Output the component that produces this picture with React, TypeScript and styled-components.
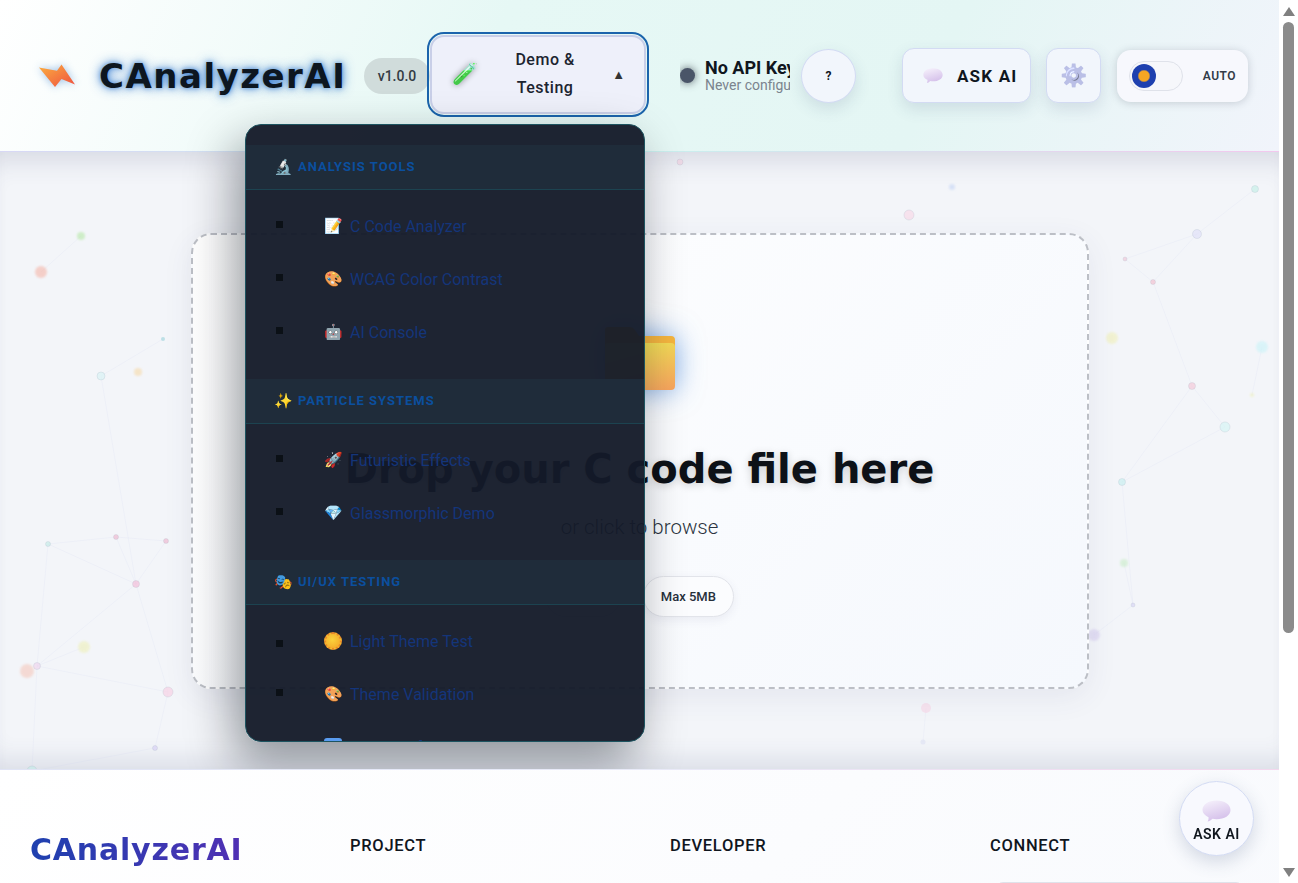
import styled, { createGlobalStyle } from 'styled-components'

const bodyFont = `Roboto, 'Liberation Sans', sans-serif`
const logoFont = `'DejaVu Sans', 'Liberation Sans', sans-serif`

const GlobalStyle = createGlobalStyle`
  * { box-sizing: border-box; }
  html, body { height: 100%; }
  body { margin: 0; overflow: hidden; background: #fff; font-family: ${bodyFont}; color: #0d1117; }
`

type Dot = { x: number; y: number; r: number; c: string; soft?: boolean; ring?: boolean }

const dots: Dot[] = [
  { x: 81, y: 236, r: 4, c: '#b6e8a8', soft: true },
  { x: 41, y: 272, r: 6, c: '#f5b5a8', soft: true },
  { x: 163, y: 339, r: 2, c: '#9fd4dc' },
  { x: 101, y: 376, r: 4, c: '#d8f3f5', ring: true },
  { x: 138, y: 372, r: 4, c: '#f6d9a8', soft: true },
  { x: 48, y: 544, r: 2.5, c: '#c5ece8', ring: true },
  { x: 116, y: 537, r: 2.5, c: '#f0b8d0', ring: true },
  { x: 166, y: 541, r: 2.5, c: '#f0b8d0', ring: true },
  { x: 136, y: 584, r: 3.5, c: '#f5bcd8', ring: true },
  { x: 84, y: 647, r: 6, c: '#eef0b8', soft: true },
  { x: 37, y: 666, r: 3.5, c: '#f0d5ee', ring: true },
  { x: 27, y: 671, r: 7, c: '#f5c8bc', soft: true },
  { x: 168, y: 692, r: 5, c: '#f8d0e4', ring: true },
  { x: 155, y: 748, r: 2.5, c: '#d8d0f5', ring: true },
  { x: 32, y: 771, r: 5, c: '#c5ece8', ring: true },
  { x: 680, y: 162, r: 3, c: '#f0d0e0', ring: true },
  { x: 952, y: 187, r: 3, c: '#c5d5f5', soft: true },
  { x: 909, y: 215, r: 5, c: '#f8d8e8', ring: true },
  { x: 926, y: 708, r: 5, c: '#f8d8e8' },
  { x: 923, y: 742, r: 2.5, c: '#dfe2f3' },
  { x: 1255, y: 189, r: 3.5, c: '#c5f0e8', ring: true },
  { x: 1197, y: 234, r: 4.5, c: '#e0e0f8', ring: true },
  { x: 1125, y: 259, r: 2, c: '#f0c8d8', ring: true },
  { x: 1153, y: 282, r: 2.5, c: '#f5c0d0', ring: true },
  { x: 1112, y: 338, r: 6, c: '#f0f0b8', soft: true },
  { x: 1262, y: 347, r: 6, c: '#c8f3f8', soft: true },
  { x: 1252, y: 395, r: 2, c: '#eef0b8', soft: true },
  { x: 1192, y: 386, r: 3.5, c: '#f5c8d8', ring: true },
  { x: 1225, y: 427, r: 5, c: '#d5f5f5', ring: true },
  { x: 1122, y: 482, r: 3.5, c: '#c8f0f0', ring: true },
  { x: 1124, y: 563, r: 4, c: '#c8ecc8', soft: true },
  { x: 1133, y: 605, r: 2, c: '#d8d5f5', ring: true },
  { x: 1094, y: 635, r: 6, c: '#d8d0f0', soft: true },
]

const links: [number, number][] = [
  [0, 1], [2, 3], [3, 8], [5, 6], [5, 8], [6, 7], [6, 8], [7, 8], [8, 12], [8, 10],
  [9, 10], [10, 12], [5, 10], [10, 14], [12, 13], [13, 14], [18, 19],
  [20, 21], [21, 22], [21, 23], [22, 23], [23, 27], [27, 28], [25, 26], [27, 29], [28, 29],
  [29, 31], [30, 31], [31, 32],
]

const BackgroundNet = () => (
  <Net viewBox="0 152 1279 617">
    {links.map(([a, b]) => (
      <NetLine key={`${a}-${b}`} x1={dots[a].x} y1={dots[a].y} x2={dots[b].x} y2={dots[b].y} />
    ))}
    {dots.map((d) => (
      <NetDot key={`${d.x}-${d.y}`} cx={d.x} cy={d.y} r={d.r} fill={d.c} $soft={d.soft} $ring={d.ring} />
    ))}
  </Net>
)

const Bubble = ({ size, id }: { size: number; id: string }) => (
  <svg width={size} height={(size * 22) / 29} viewBox="0 0 29 22">
    <defs>
      <linearGradient id={id} x1="0.2" y1="0" x2="0.6" y2="1">
        <stop offset="0" stopColor="#f5f0fb" />
        <stop offset="1" stopColor="#d3bde9" />
      </linearGradient>
    </defs>
    <path
      d="M14.5 .5 C22.5 .5 28.5 4.5 28.5 10 C28.5 15.5 22.5 19.2 14.5 19.2 C13 19.2 11.8 19 10.5 18.8 C9 20.4 7 21.6 5.6 21.6 C6.4 20.2 6.7 18.6 6.5 17.2 C2.8 15.6 .5 13 .5 10 C.5 4.5 6.5 .5 14.5 .5 Z"
      fill={`url(#${id})`}
    />
  </svg>
)

const menu = [
  {
    icon: '🔬',
    title: 'Analysis Tools',
    items: [
      ['📝', 'C Code Analyzer'],
      ['🎨', 'WCAG Color Contrast'],
      ['🤖', 'AI Console'],
    ],
  },
  {
    icon: '✨',
    title: 'Particle Systems',
    items: [
      ['🚀', 'Futuristic Effects'],
      ['💎', 'Glassmorphic Demo'],
    ],
  },
  {
    icon: '🎭',
    title: 'UI/UX Testing',
    items: [
      ['sun', 'Light Theme Test'],
      ['🎨', 'Theme Validation'],
      ['info', 'Theme Info'],
    ],
  },
]

const MenuIcon = ({ icon }: { icon: string }) => {
  if (icon === 'sun') return <SunTile />
  if (icon === 'info') return <InfoTile>i</InfoTile>
  return <MenuEmoji>{icon}</MenuEmoji>
}

const App = () => {
  return (
    <>
      <GlobalStyle />
      <Root>
        <Page>
          <Header>
            <Brand>
              <svg width="38" height="24" viewBox="0 0 38 24">
                <defs>
                  <linearGradient id="bolt" x1="0" y1="0" x2="1" y2="1">
                    <stop offset="0" stopColor="#fbb040" />
                    <stop offset="1" stopColor="#ef4f3f" />
                  </linearGradient>
                </defs>
                <path d="M1 3.5 L19 6.7 L23.5 .5 L37 20.5 L23.5 15 L17 23 Z" fill="url(#bolt)" />
              </svg>
              <LogoText>CAnalyzerAI</LogoText>
            </Brand>
            <Version>v1.0.0</Version>
            <MenuWrap>
              <DemoButton>
                <DemoIcon>🧪</DemoIcon>
                <DemoLabel>Demo &amp; Testing</DemoLabel>
                <Caret>▲</Caret>
              </DemoButton>
              <Menu>
                {menu.map((section) => (
                  <section key={section.title}>
                    <SectionHead>
                      <SectionIcon>{section.icon}</SectionIcon>
                      {section.title}
                    </SectionHead>
                    <MenuList>
                      {section.items.map(([icon, label]) => (
                        <li key={label}>
                          <MenuLink href="#">
                            <MenuIcon icon={icon} />
                            {label}
                          </MenuLink>
                        </li>
                      ))}
                    </MenuList>
                  </section>
                ))}
              </Menu>
            </MenuWrap>
            <Status>
              <StatusDot />
              <StatusText>
                <strong>No API Key</strong>
                <span>Never configured</span>
              </StatusText>
            </Status>
            <HelpButton>?</HelpButton>
            <AskButton>
              <Bubble size={20} id="bubbleHead" />
              ASK AI
            </AskButton>
            <GearButton>
              <GearEmoji>⚙️</GearEmoji>
            </GearButton>
            <ThemeCard>
              <Track>
                <Knob />
              </Track>
              <AutoLabel>AUTO</AutoLabel>
            </ThemeCard>
          </Header>

          <Main>
            <BackgroundNet />
            <DropZone>
              <FolderIcon width="70" height="64" viewBox="0 0 70 64">
                <defs>
                  <linearGradient id="folderFront" x1="0.5" y1="0" x2="0.9" y2="1">
                    <stop offset="0" stopColor="#f2e256" />
                    <stop offset="1" stopColor="#f8a55e" />
                  </linearGradient>
                </defs>
                <path d="M3 0 H25 Q28 0 30 3 L34 9 H66 Q70 9 70 13 V30 H0 V3 Q0 0 3 0 Z" fill="#f5b53f" />
                <path d="M4 16 H66 Q70 16 70 20 V59 Q70 63 66 63 H4 Q0 63 0 59 V20 Q0 16 4 16 Z" fill="url(#folderFront)" />
              </FolderIcon>
              <DropTitle>Drop your C code file here</DropTitle>
              <DropSub>or click to browse</DropSub>
              <Chips>
                <Chip>.c or .h</Chip>
                <Chip>Max 5MB</Chip>
              </Chips>
            </DropZone>
          </Main>

          <Footer>
            <div>
              <FooterLogo>CAnalyzerAI</FooterLogo>
              <FooterBlurb>Intelligent C code analysis and quality insight powered by AI.</FooterBlurb>
            </div>
            <ColTitle>Project</ColTitle>
            <ColTitle>Developer</ColTitle>
            <div>
              <ColTitle>Connect</ColTitle>
              <ConnectBox />
            </div>
          </Footer>
        </Page>

        <ScrollRail>
          <ArrowUp />
          <Thumb />
          <ArrowDown />
        </ScrollRail>
      </Root>

      <FloatButton>
        <Bubble size={29} id="bubbleFloat" />
        ASK AI
      </FloatButton>
    </>
  )
}

const Root = styled.div`
  height: 100vh;
  display: flex;
  overflow: hidden;
`

const Page = styled.div`
  flex: 1;
  min-width: 0;
  overflow: hidden;
`

const ScrollRail = styled.div`
  flex: none;
  width: 19px;
  padding: 7px 0 6px;
  display: flex;
  flex-direction: column;
  align-items: center;
  background: #fff;
`

const ArrowUp = styled.i`
  width: 0;
  height: 0;
  border-left: 6px solid transparent;
  border-right: 6px solid transparent;
  border-bottom: 9px solid #808080;
`

const ArrowDown = styled.i`
  width: 0;
  height: 0;
  margin-top: auto;
  border-left: 6px solid transparent;
  border-right: 6px solid transparent;
  border-top: 9px solid #808080;
`

const Thumb = styled.div`
  width: 11px;
  height: 611px;
  margin-top: 6px;
  border-radius: 6px;
  background: #8b8b8b;
`

const Header = styled.header`
  height: 152px;
  display: flex;
  align-items: center;
  padding-left: 38px;
  background: linear-gradient(115deg, #ffffff 0%, #e6f8f5 38%, #e4f6f4 72%, #f1f4fb 100%);
  border-bottom: 1px solid;
  border-image: linear-gradient(90deg, #d8d8f5, #c8f0ee 50%, #f3c8ee) 1;
`

const Brand = styled.div`
  flex: none;
  width: 326px;
  display: flex;
  align-items: center;
  gap: 23px;
  svg { filter: drop-shadow(0 0 4px rgba(30, 110, 200, 0.45)); }
`

const LogoText = styled.div`
  font-family: ${logoFont};
  font-weight: 700;
  font-size: 34px;
  line-height: 1;
  letter-spacing: 1.5px;
  color: #0d1620;
  text-shadow: 0 0 12px rgba(20, 100, 200, 0.8), 0 0 5px rgba(20, 100, 200, 0.6);
  white-space: nowrap;
`

const Version = styled.div`
  flex: none;
  width: 66px;
  height: 36px;
  border-radius: 18px;
  background: #d0dcdb;
  color: #333b44;
  display: flex;
  align-items: center;
  justify-content: center;
  font-size: 14px;
  font-weight: 500;
`

const MenuWrap = styled.div`
  flex: none;
  position: relative;
  margin-bottom: 3px;
`

const DemoButton = styled.button`
  width: 216px;
  height: 79px;
  padding: 0 19px 0 20px;
  display: flex;
  align-items: center;
  background: #eef0fa;
  border: 2px solid #c9cfe8;
  border-radius: 14px;
  outline: 2px solid #1b64ac;
  outline-offset: 1px;
  font-family: inherit;
  color: #1c2430;
`

const DemoIcon = styled.span`
  font-size: 21px;
  filter: hue-rotate(-50deg) saturate(0.8) brightness(1.1) drop-shadow(0 0 3px rgba(0, 0, 0, 0.4));
`

const DemoLabel = styled.span`
  flex: 1;
  padding: 0 30px;
  font-size: 16px;
  font-weight: 500;
  line-height: 28px;
  letter-spacing: 0.5px;
  text-align: center;
`

const Caret = styled.span`
  font-size: 13px;
  color: #333;
`

const Menu = styled.nav`
  position: absolute;
  z-index: 20;
  top: 89px;
  right: 1px;
  width: 400px;
  height: 618px;
  padding-top: 20px;
  overflow: hidden;
  background: rgba(20, 26, 41, 0.955);
  border: 1px solid #1d5460;
  border-radius: 16px;
  box-shadow: -10px 20px 48px rgba(0, 10, 20, 0.42);
`

const SectionHead = styled.h3`
  margin: 0;
  height: 45px;
  padding-left: 28px;
  display: flex;
  align-items: center;
  gap: 8px;
  background: #1f2c3a;
  border-bottom: 1px solid #1c4350;
  color: #0b4f9e;
  font-size: 13px;
  font-weight: 700;
  letter-spacing: 1px;
  text-transform: uppercase;
`

const SectionIcon = styled.span`
  width: 16px;
  font-size: 15px;
  letter-spacing: 0;
`

const MenuList = styled.ul`
  margin: 10px 0 20px;
  padding-left: 50px;
  list-style: square;
  font-size: 22px;
  color: #0b1016;
`

const MenuLink = styled.a`
  height: 53px;
  padding-left: 28px;
  display: flex;
  align-items: center;
  gap: 8px;
  color: #14357a;
  font-size: 16px;
  text-decoration: none;
`

const MenuEmoji = styled.span`
  width: 18px;
  font-size: 15px;
`

const SunTile = styled.span`
  width: 18px;
  height: 18px;
  border-radius: 50%;
  border: 2px dotted #ea8a2a;
  background: radial-gradient(circle at 45% 40%, #fbd23c, #f3a326);
`

const InfoTile = styled.span`
  width: 18px;
  height: 18px;
  border-radius: 3px;
  background: #5a9cf0;
  color: #fff;
  font-size: 13px;
  font-weight: 700;
  line-height: 18px;
  text-align: center;
`

const Status = styled.div`
  flex: none;
  width: 110px;
  margin-left: 34px;
  padding: 6px 0;
  display: flex;
  align-items: center;
  gap: 10px;
  overflow: hidden;
`

const StatusDot = styled.i`
  flex: none;
  width: 15px;
  height: 15px;
  border-radius: 50%;
  background: #4a5568;
  box-shadow: 0 0 8px rgba(50, 60, 70, 0.8);
`

const StatusText = styled.div`
  display: flex;
  flex-direction: column;
  white-space: nowrap;
  strong { font-size: 18px; line-height: 18px; color: #10161e; }
  span { margin-top: 1px; font-size: 14px; line-height: 14px; color: #7b848e; }
`

const raised = `
  flex: none;
  background: #f2f6fc;
  border: 1px solid #d3dbf3;
  box-shadow: 0 6px 16px rgba(60, 80, 120, 0.14);
  font-family: inherit;
  color: #10161e;
`

const HelpButton = styled.button`
  ${raised}
  width: 55px;
  height: 54px;
  margin-left: 11px;
  border-radius: 50%;
  font-size: 12px;
  font-weight: 700;
`

const AskButton = styled.button`
  ${raised}
  width: 129px;
  height: 55px;
  margin-left: 46px;
  padding-left: 20px;
  border-radius: 12px;
  display: flex;
  align-items: center;
  gap: 14px;
  font-size: 17px;
  font-weight: 700;
  letter-spacing: 1.2px;
`

const GearEmoji = styled.span`
  font-size: 22px;
  filter: grayscale(1) sepia(0.5) hue-rotate(195deg) saturate(1.4) brightness(1.05);
`

const GearButton = styled.button`
  ${raised}
  width: 55px;
  height: 55px;
  margin-left: 15px;
  border-radius: 12px;
  display: grid;
  place-items: center;
`

const ThemeCard = styled.div`
  flex: none;
  width: 131px;
  height: 52px;
  margin-left: 16px;
  padding: 0 12px;
  display: flex;
  align-items: center;
  justify-content: space-between;
  background: #f7f8fd;
  border-radius: 14px;
  box-shadow: 0 1px 8px rgba(50, 60, 80, 0.22);
`

const Track = styled.div`
  width: 54px;
  height: 30px;
  padding: 2px;
  border: 1px solid #dfe2ea;
  border-radius: 15px;
  background: #f6f7fb;
`

const Knob = styled.div`
  width: 24px;
  height: 24px;
  border-radius: 50%;
  background: radial-gradient(circle, #f5a623 0 5px, #1e40af 6.5px);
`

const AutoLabel = styled.span`
  font-size: 12px;
  font-weight: 600;
  letter-spacing: 0.5px;
  color: #333c48;
`

const Main = styled.main`
  position: relative;
  height: 617px;
  padding-top: 81px;
  background: #f3f5f9;
  box-shadow: inset 0 26px 26px -18px rgba(60, 70, 110, 0.16), inset 0 -26px 26px -18px rgba(60, 70, 110, 0.14);
`

const Net = styled.svg`
  position: absolute;
  inset: 0;
  width: 100%;
  height: 100%;
`

const NetLine = styled.line`
  stroke: #c3c9ec;
  stroke-width: 1;
  opacity: 0.12;
`

const NetDot = styled.circle<{ $soft?: boolean; $ring?: boolean }>`
  opacity: ${(p) => (p.$soft ? 0.6 : 0.65)};
  filter: ${(p) => (p.$soft ? 'blur(1.2px)' : 'none')};
  stroke: ${(p) => (p.$ring ? 'rgba(130, 150, 170, 0.25)' : 'none')};
`

const DropZone = styled.div`
  position: relative;
  width: 898px;
  height: 456px;
  margin: 0 auto;
  padding-top: 92px;
  display: flex;
  flex-direction: column;
  align-items: center;
  border: 2px dashed #bcbfc6;
  border-radius: 20px;
  background: linear-gradient(135deg, #ffffff, #f5f8fd);
  box-shadow: 0 8px 30px rgba(60, 70, 110, 0.08);
`

const FolderIcon = styled.svg`
  display: block;
  filter: drop-shadow(0 0 14px rgba(30, 110, 210, 0.6));
`

const DropTitle = styled.h2`
  margin: 54px 0 0;
  font-family: ${logoFont};
  font-size: 40px;
  line-height: 48px;
  font-weight: 700;
  color: #0d1117;
  text-shadow: 0 2px 8px rgba(0, 0, 0, 0.18);
`

const DropSub = styled.p`
  margin: 20px 0 0;
  font-size: 20.5px;
  line-height: 28px;
  font-weight: 300;
  color: #2b3440;
`

const Chips = styled.div`
  margin-top: 35px;
  display: flex;
  gap: 22px;
`

const Chip = styled.span`
  height: 41px;
  padding: 0 17px;
  display: flex;
  align-items: center;
  border: 1px solid #e2e4ea;
  border-radius: 21px;
  background: #fbfcfe;
  box-shadow: 0 3px 10px rgba(60, 70, 110, 0.08);
  font-size: 13px;
  font-weight: 500;
  color: #27303b;
`

const Footer = styled.footer`
  position: relative;
  z-index: 25;
  height: 449px;
  padding: 64px 30px 0;
  display: grid;
  grid-template-columns: repeat(4, 1fr);
  column-gap: 61px;
  background: linear-gradient(135deg, #ffffff, #f7f9fd);
  border-top: 1px solid;
  border-image: linear-gradient(90deg, #e0e4f5, #e8eaf8 50%, #f3d8ee) 1;
`

const FooterLogo = styled.div`
  font-family: ${logoFont};
  font-weight: 700;
  font-size: 30px;
  line-height: 32px;
  letter-spacing: 0.8px;
  background: linear-gradient(90deg, #1e40af, #5b2db5);
  -webkit-background-clip: text;
  background-clip: text;
  color: transparent;
`

const FooterBlurb = styled.p`
  margin: 12px 0 0;
  font-size: 15px;
  line-height: 24px;
  color: #5a6470;
`

const ColTitle = styled.h4`
  margin: 0;
  font-size: 16.5px;
  line-height: 24px;
  font-weight: 500;
  letter-spacing: 0.7px;
  text-transform: uppercase;
  color: #10161e;
`

const ConnectBox = styled.div`
  height: 120px;
  margin: 24px 5px 0;
  border: 1px solid #dfe2ea;
  border-radius: 8px;
`

const FloatButton = styled.button`
  position: fixed;
  right: 44px;
  top: 781px;
  z-index: 30;
  width: 75px;
  height: 75px;
  padding: 4px 0 0;
  border-radius: 50%;
  border: 1px solid #d3dbf3;
  background: #f8f9fe;
  box-shadow: 0 6px 18px rgba(60, 80, 120, 0.2);
  display: flex;
  flex-direction: column;
  align-items: center;
  justify-content: center;
  gap: 4px;
  font-family: inherit;
  font-size: 14px;
  font-weight: 600;
  letter-spacing: 0.5px;
  color: #10161e;
`

export default App
